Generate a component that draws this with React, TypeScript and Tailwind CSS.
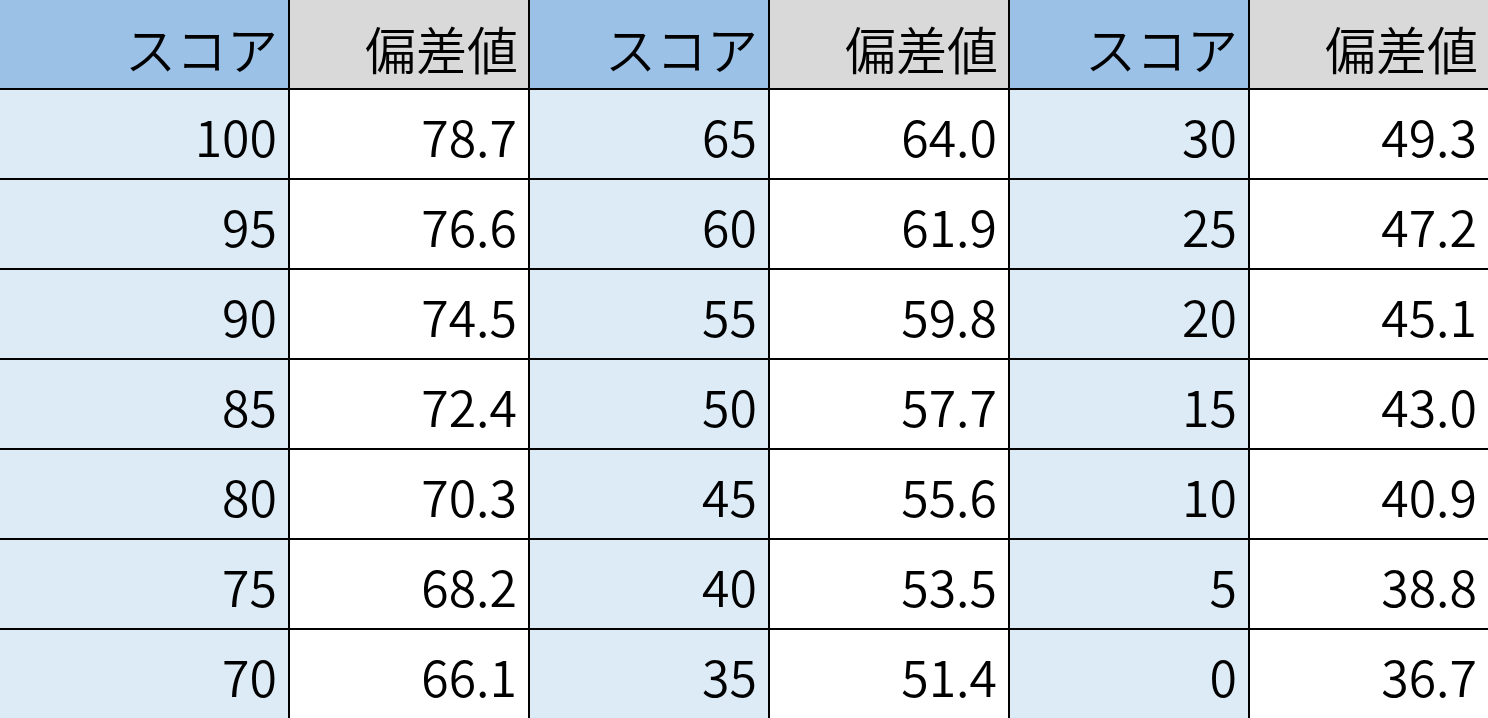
import React from "react";

const rows: [string, string, string, string, string, string][] = [
  ["100", "78.7", "65", "64.0", "30", "49.3"],
  ["95", "76.6", "60", "61.9", "25", "47.2"],
  ["90", "74.5", "55", "59.8", "20", "45.1"],
  ["85", "72.4", "50", "57.7", "15", "43.0"],
  ["80", "70.3", "45", "55.6", "10", "40.9"],
  ["75", "68.2", "40", "53.5", "5", "38.8"],
  ["70", "66.1", "35", "51.4", "0", "36.7"],
];

const widths = [
  "w-[290px] border-r-2",
  "w-[240px] border-r-2",
  "w-[240px] border-r-2",
  "w-[240px] border-r-2",
  "w-[240px] border-r-2",
  "flex-1",
];

export default function App() {
  const headers = ["スコア", "偏差値", "スコア", "偏差値", "スコア", "偏差値"];
  return (
    <div
      className="w-[1488px] h-[718px] overflow-hidden bg-white text-black"
      style={{ fontFamily: '"Noto Sans CJK JP", "Noto Sans", sans-serif' }}
    >
      <div className="flex h-[90px] border-b-2 border-black">
        {headers.map((h, i) => (
          <div
            key={i}
            className={`${widths[i]} border-black flex items-center justify-end pr-[10px] pt-[8px] text-[51px] font-[350] leading-none ${
              i % 2 === 0 ? "bg-[#9bc2e6]" : "bg-[#d9d9d9]"
            }`}
          >
            {h}
          </div>
        ))}
      </div>
      {rows.map((r, ri) => (
        <div key={ri} className="flex h-[90px] border-b-2 border-black">
          {r.map((c, i) => (
            <div
              key={i}
              className={`${widths[i]} border-black flex items-center justify-end pr-[11px] pt-[2px] text-[50px] font-[350] leading-none ${
                i % 2 === 0 ? "bg-[#ddebf7]" : "bg-white"
              }`}
            >
              {c}
            </div>
          ))}
        </div>
      ))}
    </div>
  );
}
